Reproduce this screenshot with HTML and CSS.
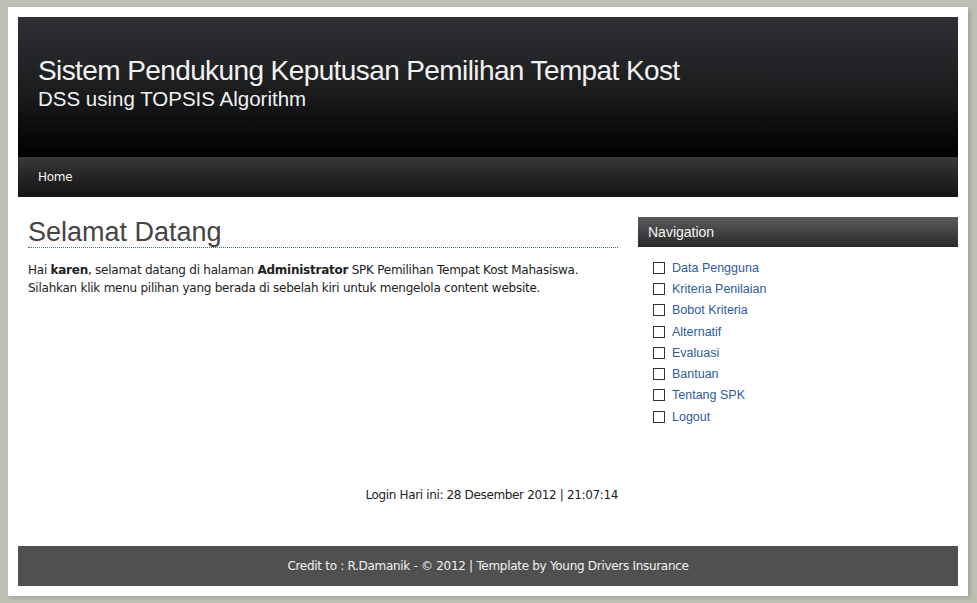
FILE: index.html
```html
<!DOCTYPE html>
<html>
<head>
<meta charset="utf-8">
<title>SPK</title>
<link rel="stylesheet" href="styles.css">
</head>
<body>
<div class="page">
  <div class="header">
    <h1 class="site-title">Sistem Pendukung Keputusan Pemilihan Tempat Kost</h1>
    <div class="site-sub">DSS using TOPSIS Algorithm</div>
  </div>
  <div class="menu"><a href="#">Home</a></div>
  <div class="body">
    <div class="main">
      <h2 class="heading">Selamat Datang</h2>
      <p class="intro">Hai <b>karen</b>, selamat datang di halaman <b>Administrator</b> SPK Pemilihan Tempat Kost Mahasiswa.<br>Silahkan klik menu pilihan yang berada di sebelah kiri untuk mengelola content website.</p>
      <div class="login">Login Hari ini: 28 Desember 2012 | 21:07:14</div>
    </div>
    <div class="side">
      <div class="side-title">Navigation</div>
      <ul class="side-list">
        <li><span class="box"></span><a href="#">Data Pengguna</a></li>
        <li><span class="box"></span><a href="#">Kriteria Penilaian</a></li>
        <li><span class="box"></span><a href="#">Bobot Kriteria</a></li>
        <li><span class="box"></span><a href="#">Alternatif</a></li>
        <li><span class="box"></span><a href="#">Evaluasi</a></li>
        <li><span class="box"></span><a href="#">Bantuan</a></li>
        <li><span class="box"></span><a href="#">Tentang SPK</a></li>
        <li><span class="box"></span><a href="#">Logout</a></li>
      </ul>
    </div>
  </div>
  <div class="footer">Credit to : R.Damanik - © 2012 | Template by Young Drivers Insurance</div>
</div>
</body>
</html>
```
FILE: styles.css
```css
html, body {
  margin: 0;
  padding: 0;
}
body {
  background: #bebfb2;
  font-family: "Liberation Sans", Arial, sans-serif;
  width: 977px;
  height: 603px;
  overflow: hidden;
}
.page {
  margin: 7px 0 0 8px;
  width: 940px;
  padding: 10px;
  background: #fff;
  box-shadow: 2px 2px 4px rgba(0,0,0,0.15);
}
.header {
  height: 140px;
  background: linear-gradient(#2f3134 0%, #1a1b1d 55%, #000 100%);
  padding: 0 20px;
  box-sizing: border-box;
  overflow: hidden;
}
.site-title {
  margin: 0;
  padding-top: 38px;
  font-size: 28px;
  font-weight: normal;
  letter-spacing: -0.6px;
  color: #f2f2f2;
  line-height: 32px;
}
.site-sub {
  font-size: 20.5px;
  color: #f2f2f2;
  line-height: 24px;
}
.menu {
  height: 40px;
  background: linear-gradient(#3a3a3a 0%, #262626 45%, #141414 100%);
  padding: 0 20px;
  display: flex;
  align-items: center;
}
.menu a {
  color: #f4f4f4;
  text-decoration: none;
  font-size: 12px;
  font-family: "DejaVu Sans", sans-serif;
  letter-spacing: -0.3px;
}
.body {
  display: flex;
  height: 349px;
  padding-top: 20px;
  box-sizing: border-box;
}
.main {
  width: 590px;
  margin-left: 10px;
  display: flex;
  flex-direction: column;
}
.heading {
  margin: 0;
  font-size: 27px;
  font-weight: normal;
  color: #444;
  line-height: 30px;
  padding-bottom: 0;
  border-bottom: 1px dotted #4b6b7a;
}
.intro {
  margin: 13px 0 0;
  font-size: 12px;
  font-family: "DejaVu Sans", sans-serif;
  letter-spacing: -0.25px;
  line-height: 18px;
  color: #222;
}
.intro b {
  color: #222;
}
.login {
  margin-top: 191px;
  text-align: right;
  font-size: 12px;
  font-family: "DejaVu Sans", sans-serif;
  letter-spacing: -0.35px;
  color: #222;
}
.side {
  margin-left: 20px;
  width: 320px;
}
.side-title {
  height: 30px;
  background: linear-gradient(#5a5a5a, #2a2a2a);
  color: #f4f4f4;
  font-size: 14px;
  line-height: 31px;
  padding-left: 10px;
  box-sizing: border-box;
}
.side-list {
  list-style: none;
  margin: 10px 0 0;
  padding: 0 0 0 15px;
}
.side-list li {
  display: flex;
  align-items: center;
  height: 21.3px;
  font-size: 12.5px;
}
.box {
  width: 10px;
  height: 10px;
  border: 1px solid #333;
  margin-right: 7px;
  flex: none;
}
.side-list a {
  color: #2d5c9c;
  text-decoration: none;
}
.footer {
  margin-top: 0;
  height: 40px;
  background: #505050;
  color: #f0f0f0;
  font-size: 12px;
  font-family: "DejaVu Sans", sans-serif;
  letter-spacing: -0.3px;
  display: flex;
  align-items: center;
  justify-content: center;
}
```
